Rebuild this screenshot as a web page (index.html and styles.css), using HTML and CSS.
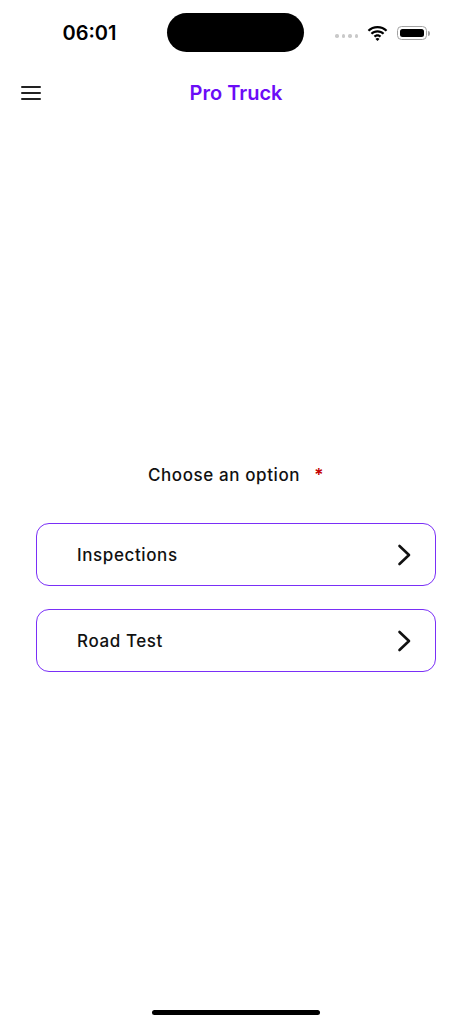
FILE: index.html
```html
<!DOCTYPE html>
<html lang="en">
<head>
<meta charset="utf-8">
<title>Pro Truck</title>
<link rel="stylesheet" href="styles.css">
</head>
<body>
<div class="screen">
  <header class="status-bar">
    <div class="status-left"><span class="time">06:01</span></div>
    <div class="island"></div>
    <div class="status-right">
      <div class="signal"><i></i><i></i><i></i><i></i></div>
      <svg class="wifi" width="21" height="15" viewBox="0 0 21 15">
        <path d="M10.5 2.2c3.2 0 6.1 1.2 8.3 3.3l1.5-1.6C17.7 1.5 14.3 0 10.5 0S3.3 1.5.7 3.9l1.5 1.6c2.2-2.1 5.1-3.3 8.3-3.3z" fill="#000"/>
        <path d="M10.5 6.4c2 0 3.9.8 5.3 2.1l1.5-1.6c-1.8-1.7-4.2-2.700-6.8-2.7S5.5 5.2 3.7 6.9l1.5 1.6c1.4-1.3 3.3-2.1 5.3-2.1z" fill="#000"/>
        <path d="M10.5 10.5c.9 0 1.7.3 2.3.9l1.5-1.6c-1-.9-2.4-1.5-3.8-1.5s-2.8.6-3.8 1.5l1.5 1.6c.6-.6 1.4-.9 2.3-.9z" fill="#000"/>
        <path d="M10.5 15l2-2.1c-.5-.5-1.2-.8-2-.8s-1.5.3-2 .8z" fill="#000"/>
      </svg>
      <div class="battery"><div class="battery-body"><div class="battery-fill"></div></div><div class="battery-nub"></div></div>
    </div>
  </header>

  <nav class="nav-bar">
    <div class="nav-left">
      <button class="menu-btn" aria-label="Menu"><span></span><span></span><span></span></button>
    </div>
    <h1 class="title">Pro Truck</h1>
    <div class="nav-right"></div>
  </nav>

  <main class="content">
    <p class="prompt">Choose an option <span class="required">*</span></p>
    <div class="options">
      <button class="option">
        <span class="option-label">Inspections</span>
        <svg class="chevron" width="14" height="22" viewBox="0 0 14 22"><path d="M2.5 2l9.5 9-9.5 9" fill="none" stroke="#111" stroke-width="2.6" stroke-linecap="round" stroke-linejoin="round"/></svg>
      </button>
      <button class="option">
        <span class="option-label">Road Test</span>
        <svg class="chevron" width="14" height="22" viewBox="0 0 14 22"><path d="M2.5 2l9.5 9-9.5 9" fill="none" stroke="#111" stroke-width="2.6" stroke-linecap="round" stroke-linejoin="round"/></svg>
      </button>
    </div>
  </main>

  <footer class="home-area"><div class="home-indicator"></div></footer>
</div>
</body>
</html>
```
FILE: styles.css
```css
* { box-sizing: border-box; }
html, body { margin: 0; padding: 0; background: #fff; }
body { font-family: Inter, "Noto Sans", "Liberation Sans", sans-serif; color: #111; }

.screen {
  width: 472px;
  height: 1024px;
  display: flex;
  flex-direction: column;
  overflow: hidden;
}

/* status bar */
.status-bar {
  height: 64px;
  padding-top: 13px;
  display: grid;
  grid-template-columns: 167px 137px 1fr;
  align-items: start;
}
.status-left {
  height: 39px;
  display: flex;
  align-items: center;
  justify-content: center;
  padding-left: 12px;
}
.time {
  font-size: 20px;
  font-weight: 600;
  letter-spacing: 0;
  color: #000;
}
.island {
  height: 39px;
  background: #000;
  border-radius: 20px;
}
.status-right {
  height: 39px;
  display: flex;
  align-items: center;
  padding-left: 31px;
  padding-top: 1px;
}
.signal {
  display: flex;
  gap: 3px;
  align-items: center;
  margin-top: 6px;
  margin-right: 9px;
}
.signal i {
  display: block;
  width: 3.5px;
  height: 3.5px;
  border-radius: 50%;
  background: #c9c9c9;
}
.wifi { display: block; margin-right: 9px; }
.battery { display: flex; align-items: center; }
.battery-body {
  width: 30px;
  height: 14px;
  border: 1.3px solid #a3a3a3;
  border-radius: 4.5px;
  padding: 1.6px;
}
.battery-fill {
  width: 100%;
  height: 100%;
  background: #000;
  border-radius: 2.5px;
}
.battery-nub {
  width: 2px;
  height: 5px;
  margin-left: 1px;
  background: #a3a3a3;
  border-radius: 0 2px 2px 0;
}

/* nav bar */
.nav-bar {
  height: 58px;
  display: grid;
  grid-template-columns: 1fr auto 1fr;
  align-items: center;
}
.nav-left { padding-left: 21px; display: flex; }
.menu-btn {
  border: 0;
  background: none;
  padding: 0;
  width: 20px;
  display: flex;
  flex-direction: column;
  gap: 3.7px;
  cursor: pointer;
}
.menu-btn span {
  display: block;
  height: 2px;
  width: 20px;
  background: #222;
  border-radius: 1px;
}
.title {
  margin: 0;
  font-size: 20px;
  font-weight: 600;
  color: #6b0cf7;
  letter-spacing: 0;
}

/* content */
.content {
  flex: 1;
  padding-top: 342px;
  display: flex;
  flex-direction: column;
  align-items: center;
}
.prompt {
  margin: 0;
  height: 22px;
  line-height: 22px;
  font-size: 17px;
  font-weight: 500;
  letter-spacing: 0.6px;
  color: #111;
}
.required {
  color: #c40000;
  margin-left: 9px;
  font-weight: 600;
}
.options {
  margin-top: 37px;
  width: 400px;
  display: flex;
  flex-direction: column;
  gap: 23px;
}
.option {
  height: 63px;
  width: 100%;
  border: 1.5px solid #7a2ff7;
  border-radius: 13px;
  background: #fff;
  display: flex;
  align-items: center;
  justify-content: space-between;
  padding: 0 24px 0 40px;
  font-family: inherit;
  cursor: pointer;
}
.option-label {
  font-size: 17px;
  font-weight: 500;
  letter-spacing: 0.6px;
  color: #111;
}
.chevron { display: block; }

/* home indicator */
.home-area {
  height: 14px;
  display: flex;
  justify-content: center;
}
.home-indicator {
  width: 168px;
  height: 5px;
  background: #000;
  border-radius: 3px;
}
```
